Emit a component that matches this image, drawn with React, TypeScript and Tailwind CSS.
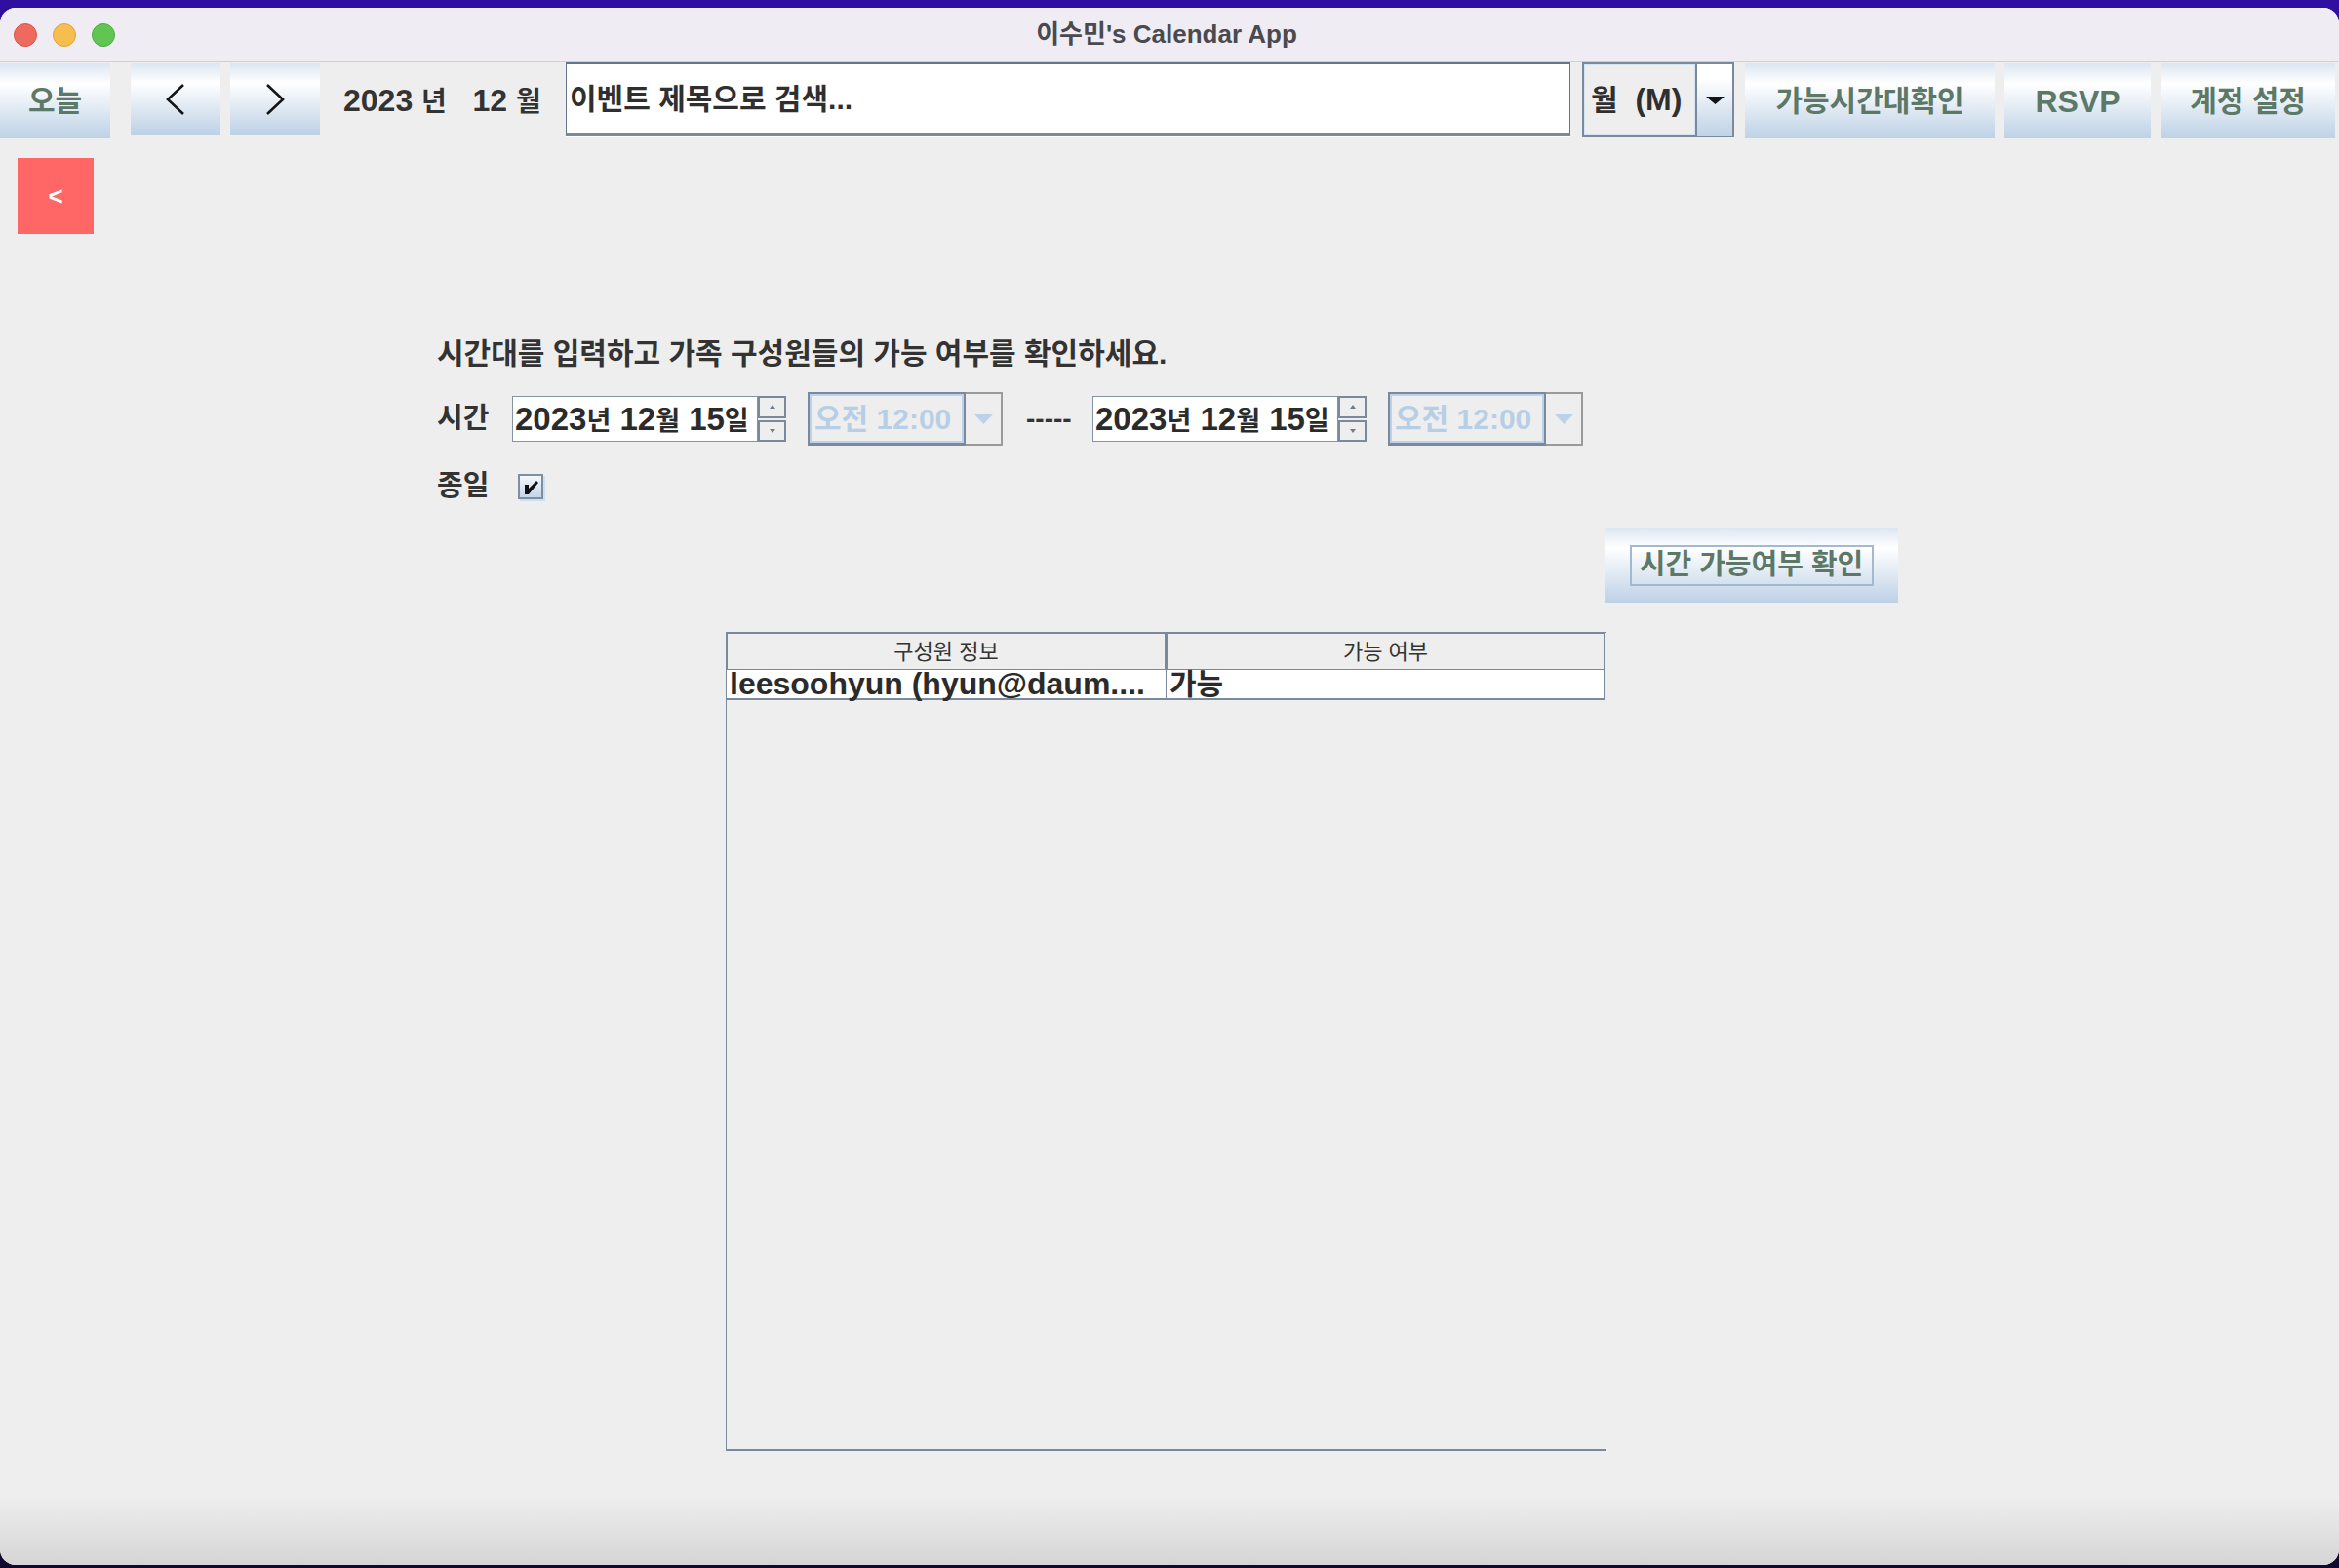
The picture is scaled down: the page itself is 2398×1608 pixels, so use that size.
import React from 'react';

const BTN_GRAD = 'bg-[linear-gradient(to_bottom,#dbe6f2_0%,#ffffff_27%,#bdd1e6_100%)]';
const BTN_TEXT = 'text-[#5c7866] font-bold';

function ToolButton({ className, children }: { className: string; children: React.ReactNode }) {
  return (
    <div className={`${BTN_GRAD} ${BTN_TEXT} flex items-center justify-center shrink-0 ${className}`}>
      {children}
    </div>
  );
}

function Chevron({ dir }: { dir: 'left' | 'right' }) {
  return (
    <svg width="22" height="34" viewBox="0 0 22 34">
      <polyline
        points={dir === 'left' ? '19,2 3,17 19,32' : '3,2 19,17 3,32'}
        fill="none"
        stroke="#151515"
        strokeWidth="2.6"
      />
    </svg>
  );
}

function DateSpinner() {
  return (
    <div className="flex w-[281px] h-[47px] shrink-0">
      <div className="flex-1 bg-white border border-[#8494a6] flex items-center pl-[2px] text-[33px] font-bold text-[#2b2b2b] leading-none whitespace-pre overflow-hidden">
        <span>
          2023<span className="text-[27px]">년</span> 12<span className="text-[27px]">월</span> 15<span className="text-[27px]">일</span>
        </span>
      </div>
      <div className="w-[29px] flex flex-col gap-[2px]">
        <div className="flex-1 bg-[#eeeeee] border-2 border-[#7a8a9c] flex items-center justify-center">
          <svg width="6" height="4" viewBox="0 0 6 4"><polygon points="3,0 6,4 0,4" fill="#6d7d8f" /></svg>
        </div>
        <div className="flex-1 bg-[#eeeeee] border-2 border-[#7a8a9c] flex items-center justify-center">
          <svg width="6" height="4" viewBox="0 0 6 4"><polygon points="0,0 6,0 3,4" fill="#6d7d8f" /></svg>
        </div>
      </div>
    </div>
  );
}

function TimeCombo() {
  return (
    <div className="flex w-[200px] h-[55px] shrink-0">
      <div className="w-[162px] bg-[#eeeeee] border-2 border-b-[3px] border-[#7a8a9c]">
        <div className="h-full border-2 border-[#bcd2e8] flex items-center pl-[3px] text-[30px] font-bold text-[#b7cfe6] whitespace-nowrap">
          오전 12:00
        </div>
      </div>
      <div className="flex-1 bg-[#eeeeee] border-2 border-l-0 border-[#9a9a9a] flex items-center justify-center">
        <svg width="19" height="10" viewBox="0 0 19 10"><polygon points="0,0 19,0 9.5,10" fill="#bcd2e8" /></svg>
      </div>
    </div>
  );
}

export default function App() {
  return (
    <div className="w-[2398px] h-[1608px] overflow-hidden flex flex-col pt-[8px] pb-[3px] bg-[linear-gradient(to_bottom,#2f0ea0_0%,#2a0c9c_50%,#120a2c_100%)] font-['Liberation_Sans','Noto_Sans_CJK_KR',sans-serif]">
      <div className="flex-1 flex flex-col rounded-[16px] overflow-hidden bg-[#eeeeee]">
        {/* title bar */}
        <div className="h-[56px] shrink-0 bg-[#efedf3] border-b border-[#d0cfd4] grid grid-cols-[1fr_auto_1fr] items-center">
          <div className="flex items-center gap-[16px] pl-[14px]">
            <div className="w-[24px] h-[24px] rounded-full bg-[#ee6a5f] border border-[#d9564b]" />
            <div className="w-[24px] h-[24px] rounded-full bg-[#f5be4f] border border-[#dca53a]" />
            <div className="w-[24px] h-[24px] rounded-full bg-[#61c554] border border-[#4eaa42]" />
          </div>
          <div className="text-[26px] font-bold text-[#4a4a4e] pr-[6px]">이수민's Calendar App</div>
          <div />
        </div>

        {/* toolbar */}
        <div className="h-[78px] shrink-0 flex items-start">
          <ToolButton className="w-[113px] h-[77px] mt-[1px] text-[30px]">오늘</ToolButton>
          <ToolButton className="w-[92px] h-[73px] mt-[1px] ml-[21px]"><Chevron dir="left" /></ToolButton>
          <ToolButton className="w-[92px] h-[73px] mt-[1px] ml-[10px]"><Chevron dir="right" /></ToolButton>
          <div className="w-[228px] h-[77px] shrink-0 ml-[24px] flex items-center text-[32px] font-bold text-[#333333] whitespace-pre">
            <span>
              2023 <span className="text-[28px]">년</span>   12 <span className="text-[28px]">월</span>
            </span>
          </div>
          <div className="w-[1030px] h-[77px] shrink-0 bg-white flex flex-col pb-[2px]">
            <div className="flex-1 border-t-2 border-l border-r border-b-[3px] border-[#66768a] border-b-[#7d8a98] flex items-center pl-[3px] text-[30px] font-bold text-[#2f2f2f]">
              이벤트 제목으로 검색...
            </div>
          </div>
          <div className="w-[156px] h-[77px] shrink-0 ml-[12px] flex">
            <div className="w-[118px] bg-[#eeeeee] border-2 border-b-[3px] border-[#7a8a9c]">
              <div className="h-full border border-[#d6e3f0] flex items-center pl-[6px] text-[32px] font-bold text-[#2f2f2f] whitespace-pre">
                <span>
                  <span className="text-[30px]">월</span>  (M)
                </span>
              </div>
            </div>
            <div className="flex-1 border-2 border-l-0 border-[#7a8a9c] bg-[linear-gradient(to_bottom,#ffffff_0%,#ffffff_20%,#bfd3e7_100%)] flex items-center justify-center">
              <svg width="19" height="8" viewBox="0 0 19 8"><polygon points="0,0 19,0 9.5,8" fill="#141414" /></svg>
            </div>
          </div>
          <ToolButton className="w-[256px] h-[77px] mt-[1px] ml-[11px] text-[30px]">가능시간대확인</ToolButton>
          <ToolButton className="w-[150px] h-[77px] mt-[1px] ml-[10px] text-[32px]">RSVP</ToolButton>
          <ToolButton className="w-[179px] h-[77px] mt-[1px] ml-[10px] text-[30px]">계정 설정</ToolButton>
        </div>

        {/* body */}
        <div className="flex-1 flex flex-col">
          <div className="mt-[20px] ml-[18px] w-[78px] h-[78px] bg-[#ff6666] flex items-center justify-center text-white font-bold text-[26px]">
            &lt;
          </div>

          <div className="ml-[448px] mt-[106px] flex flex-col text-[#333333]">
            <div className="h-[34px] leading-[34px] text-[30px] font-bold">
              시간대를 입력하고 가족 구성원들의 가능 여부를 확인하세요.
            </div>

            <div className="mt-[22px] h-[55px] flex items-center">
              <div className="w-[77px] text-[29px] font-bold">시간</div>
              <DateSpinner />
              <div className="ml-[22px]"><TimeCombo /></div>
              <div className="w-[92px] shrink-0 pl-[24px] text-[28px] font-bold whitespace-nowrap">-----</div>
              <DateSpinner />
              <div className="ml-[22px]"><TimeCombo /></div>
            </div>

            <div className="mt-[28px] h-[27px] flex items-center">
              <div className="w-[83px] text-[29px] font-bold">종일</div>
              <div className="w-[26px] h-[26px] border-2 border-[#7f8fa0] bg-[linear-gradient(to_bottom,#f4f8fc,#c3d5e8)] shadow-[2px_2px_0_#cfdeed]">
                <svg width="22" height="22" viewBox="0 0 22 22">
                  <path d="M5 9 L9 9 L9 13 L17 5 L19 7 L9 19 L5 19 Z" fill="#111111" />
                </svg>
              </div>
            </div>

            <div className={`mt-[29px] ml-[1197px] w-[301px] h-[77px] ${BTN_GRAD} flex items-center justify-center`}>
              <div className={`w-[250px] h-[42px] border-2 border-[#a3b9cf] flex items-center justify-center text-[29px] whitespace-nowrap ${BTN_TEXT}`}>
                시간 가능여부 확인
              </div>
            </div>
          </div>

          {/* table */}
          <div className="ml-[744px] mt-[30px] w-[903px] h-[840px] border border-b-2 border-[#7a8a9c] bg-[#eeeeee] flex flex-col">
            <div className="h-[38px] flex text-[22px] text-[#333333]">
              <div className="w-[450px] border border-[#7a8a9c] flex items-center justify-center">구성원 정보</div>
              <div className="w-[450px] border border-l-2 border-[#7a8a9c] flex items-center justify-center">가능 여부</div>
            </div>
            <div className="h-[31px] w-[900px] flex bg-white border-b-2 border-r border-[#7a8a9c] text-[32px] font-bold text-[#2b2b2b] leading-[29px]">
              <div className="w-[451px] border-r border-[#7a8a9c] pl-[3px] whitespace-nowrap">leesoohyun (hyun@daum....</div>
              <div className="flex-1 pl-[3px] text-[30px]">가능</div>
            </div>
          </div>

          <div className="flex-1 bg-[linear-gradient(to_bottom,#eeeeee_0%,#eeeeee_40%,#d5d5d5_100%)]" />
        </div>
      </div>
    </div>
  );
}
